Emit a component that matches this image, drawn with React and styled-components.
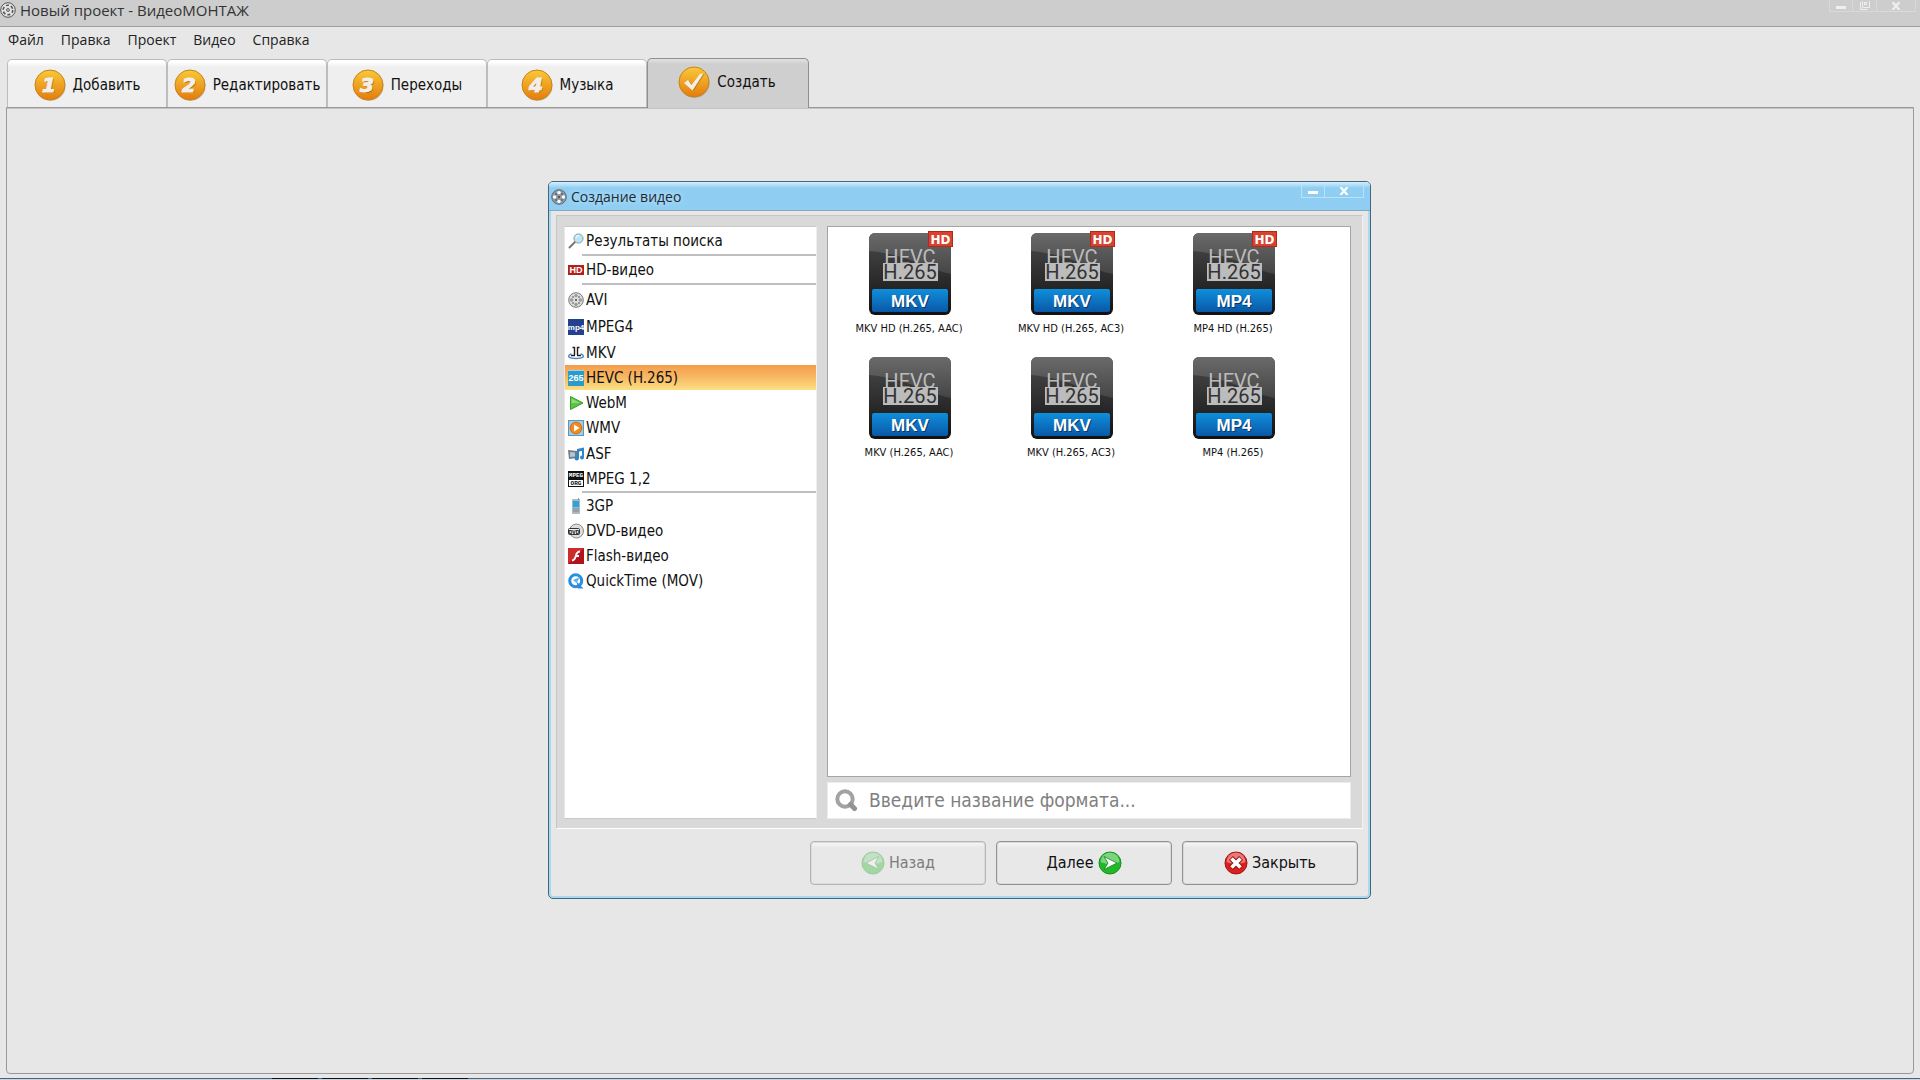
import { useState } from "react";
import styled, { createGlobalStyle } from "styled-components";

const GlobalStyle = createGlobalStyle`
  * { box-sizing: border-box; }
  body {
    margin: 0;
    background: #e7e7e7;
    color: #111;
    font-family: "DejaVu Sans Condensed", "Noto Sans", sans-serif;
  }
  button, input { font-family: inherit; color: inherit; }
`;

const Window = styled.div`
  display: flex;
  flex-direction: column;
  min-height: 100vh;
`;

const TitleBar = styled.header`
  display: flex;
  align-items: center;
  gap: 4px;
  height: 27px;
  padding-bottom: 6px;
  background: #cdcdcd;
  border-bottom: 1px solid #9f9f9f;
`;

const Title = styled.h1`
  flex: 1;
  margin: 0;
  font-family: "Open Sans", sans-serif;
  font-size: 15px;
  font-weight: 400;
  line-height: 20px;
  color: #333;
`;

const Controls = styled.div`
  display: flex;
  align-self: flex-start;
  margin-right: 4px;
`;

const Control = styled.button`
  display: flex;
  align-items: center;
  justify-content: center;
  width: ${({ $wide }) => ($wide ? "39px" : "24px")};
  height: ${({ $light }) => ($light ? "14px" : "12px")};
  padding: 0;
  background: transparent;
  border: 1px solid ${({ $light }) => ($light ? "#b9e2f8" : "#d9d9d9")};
  border-top: 0;
  & + & { border-left: 0; }
`;

const Menu = styled.nav`
  display: flex;
  gap: 17px;
  height: 31px;
  padding: 2px 8px;
`;

const MenuLink = styled.a`
  font-family: "Open Sans", sans-serif;
  font-size: 14px;
  line-height: 22px;
  color: #222;
  text-decoration: none;
`;

const Tabs = styled.div`
  display: flex;
  align-items: flex-end;
  height: 49px;
  padding-left: 7px;
`;

const Tab = styled.button`
  position: relative;
  display: flex;
  align-items: center;
  justify-content: center;
  gap: 7px;
  width: ${({ $active }) => ($active ? "162px" : "160px")};
  height: ${({ $active }) => ($active ? "50px" : "48px")};
  margin-bottom: ${({ $active }) => ($active ? "-1px" : "0")};
  padding: ${({ $active }) => ($active ? "0 2px 3px 0" : "2px 0 0")};
  white-space: nowrap;
  font-size: 15px;
  line-height: 22px;
  border: 1px solid ${({ $active }) => ($active ? "#8f8f8f" : "#bdbdbd")};
  border-bottom: 0;
  border-radius: 5px 5px 0 0;
  background: ${({ $active }) =>
    $active ? "linear-gradient(#e2e2e2, #cfcfcf 5px)" : "linear-gradient(#fff 2px, #efefef 7px)"};
`;

const Workspace = styled.main`
  flex: 1;
  display: flex;
  justify-content: center;
  align-items: flex-start;
  margin: 0 6px 4px;
  padding: 73px 17px 24px 16px;
  border: 1px solid #999;
  border-radius: 0 0 4px 4px;
  box-shadow: inset 0 1px 0 #c4c4c4;
`;

const Dialog = styled.section`
  width: 100%;
  max-width: 823px;
  border: 1px solid #46647c;
  border-radius: 5px;
  background: #e7e7e7;
  box-shadow: inset 0 0 0 2px #a9d9ee;
`;

const DialogTitleBar = styled.div`
  display: flex;
  align-items: center;
  gap: 4px;
  height: 29px;
  padding: 2px 2px 0;
  border-bottom: 1px solid #86a9bf;
  border-radius: 4px 4px 0 0;
  background: linear-gradient(#d4effc, #8fcef2 6px);
`;

const DialogTitle = styled.h2`
  flex: 1;
  margin: 0;
  font-family: "Open Sans", sans-serif;
  font-size: 14px;
  font-weight: 400;
  line-height: 22px;
  color: #1c2a36;
  text-shadow: 0 0 6px #d6eefb;
`;

const DialogBody = styled.div`
  display: flex;
  gap: 10px;
  margin: 4px 7px 0;
  padding: 10px 11px 9px 7px;
  background: #d9d9d9;
  border: 1px solid #c6c6c6;
  border-right-color: #f2f2f2;
  border-bottom-color: #fff;
`;

const FormatList = styled.ul`
  flex: 0 0 253px;
  min-height: 593px;
  margin: 0;
  padding: 0;
  list-style: none;
  background: #fff;
  border: 1px solid #c9c9c9;
  border-left-color: #e8e8e8;
  border-right-color: #efefef;
`;

const FormatItem = styled.li`
  height: ${({ $tall }) => $tall || 25}px;
  ${({ $line }) =>
    $line &&
    `background: linear-gradient(#bfbfbf, #bfbfbf) 17px 100% / 100% 2px no-repeat;
    padding-bottom: 2px;`}
`;

const FormatButton = styled.button`
  display: flex;
  align-items: center;
  gap: 2px;
  width: 100%;
  height: 100%;
  padding: 0 3px;
  border: 0;
  font-size: 15px;
  line-height: 22px;
  text-align: left;
  background: ${({ $active }) =>
    $active ? "linear-gradient(#f39d4c, #f8b964 50%, #fbe082)" : "transparent"};
`;

const Column = styled.div`
  flex: 1;
  display: flex;
  flex-direction: column;
  gap: 5px;
  min-width: 0;
`;

const Presets = styled.div`
  flex: 1;
  display: grid;
  grid-template-columns: repeat(auto-fill, 162px);
  grid-auto-rows: 124px;
  background: #fff;
  border: 1px solid #a5a5a5;
`;

const Preset = styled.button`
  display: flex;
  flex-direction: column;
  align-items: center;
  padding: 3px 0 0;
  border: 0;
  background: transparent;
  font-size: 11px;
  line-height: 26px;
  white-space: nowrap;
`;

const Search = styled.label`
  display: flex;
  align-items: center;
  gap: 11px;
  height: 37px;
  padding: 0 7px;
  background: #fff;
  border: 1px solid #ececec;
`;

const SearchInput = styled.input`
  flex: 1;
  min-width: 0;
  padding: 0 0 2px;
  border: 0;
  outline: 0;
  font-size: 19px;
  line-height: 28px;
  background: transparent;
  &::placeholder { color: #808080; opacity: 1; }
`;

const Footer = styled.footer`
  display: flex;
  justify-content: flex-end;
  gap: 10px;
  padding: 12px 12px 13px;
`;

const FooterButton = styled.button`
  display: flex;
  align-items: center;
  justify-content: center;
  gap: 4px;
  width: 176px;
  height: 44px;
  padding: 0;
  font-size: 16px;
  line-height: 22px;
  color: #111;
  border: 1px solid #919191;
  border-radius: 4px;
  background: linear-gradient(#f8f8f8, #e8e8e8 6px);
  box-shadow: inset 0 0 0 1px #dadada;
  &:disabled {
    color: #7c7c7c;
    border-color: #b5b5b5;
  }
`;

const Taskbar = styled.div`
  display: flex;
  gap: 4px;
  height: 2px;
  padding-left: 272px;
  background: #c5d5e2;
  border-top: 1px solid #4f6374;
`;

const TaskbarSlot = styled.span`
  width: 46px;
  height: 1px;
  margin-top: -1px;
  background: #111;
`;

const ReelIcon = ({ size = 16, dark }) => (
  <svg width={size} height={size} viewBox="0 0 16 16">
    <circle cx="8" cy="8" r="7.3" fill={dark ? "#8d98a5" : "#dedede"} stroke={dark ? "#5f6c78" : "#777"} strokeWidth="1" />
    <g fill={dark ? "#fff" : "#9a9a9a"}>
      <circle cx="8" cy="3.6" r="1.7" />
      <circle cx="8" cy="12.4" r="1.7" />
      <circle cx="3.6" cy="8" r="1.7" />
      <circle cx="12.4" cy="8" r="1.7" />
    </g>
    <g fill="#444">
      <circle cx="5" cy="5" r="0.8" />
      <circle cx="11" cy="5" r="0.8" />
      <circle cx="5" cy="11" r="0.8" />
      <circle cx="11" cy="11" r="0.8" />
      <circle cx="8" cy="8" r="1" />
    </g>
  </svg>
);

const AppIcon = () => (
  <svg width="16" height="16" viewBox="0 0 16 16" fill="none" stroke="#555">
    <circle cx="8" cy="8" r="7.3" fill="#e3e3e3" />
    <circle cx="8" cy="8" r="4.8" strokeWidth="1.6" strokeDasharray="3 2" />
    <circle cx="8" cy="8" r="1.4" />
  </svg>
);

const StepIcon = ({ step }) => (
  <svg width="32" height="32" viewBox="0 0 32 32">
    <defs>
      <linearGradient id="gold" x1="0" y1="0" x2="0" y2="1">
        <stop offset="0" stopColor="#f9c938" />
        <stop offset="1" stopColor="#e47c0c" />
      </linearGradient>
    </defs>
    <circle cx="16.5" cy="17" r="15" fill="#9a8a78" opacity="0.5" />
    <circle cx="16" cy="16" r="15" fill="url(#gold)" stroke="#c98218" strokeWidth="1" />
    {step ? (
      <g fontFamily="DejaVu Sans" fontWeight="700" fontStyle="italic" fontSize="20" textAnchor="middle" strokeWidth="1">
        <text x="16" y="24" fill="#a8661a">{step}</text>
        <text x="15" y="23" fill="#f3efe8" stroke="#f3efe8">{step}</text>
      </g>
    ) : (
      <>
        <path d="M7 17.500l4-3 3.500 5 8.500-11 3.500-.5-11 17z" fill="#a8661a" opacity="0.6" />
        <path d="M6 17l4-3 3.500 5 8.500-11 3.500-.5-11 17z" fill="#f3efe8" />
      </>
    )}
  </svg>
);

const BadgeIcon = ({ text, bg, size = 7, border }) => (
  <svg width="16" height="16" viewBox="0 0 16 16">
    <rect width="16" height="16" fill={bg} />
    {border && <path d="M0 .5h16" stroke={border} />}
    <text x="8" y="11" fill="#fff" fontFamily="Liberation Sans" fontWeight="700" fontSize={size} textAnchor="middle">{text}</text>
  </svg>
);

const icons = {
  find: (
    <svg width="16" height="16" viewBox="0 0 16 16">
      <path d="M1.500 14.500L7 9" stroke="#777" strokeWidth="2" strokeLinecap="round" />
      <circle cx="10.500" cy="5.500" r="4.600" fill="#b9e6f3" stroke="#8d9ba3" />
      <path d="M8 5a3 3 0 0 1 3-2.500" stroke="#fff" fill="none" />
    </svg>
  ),
  hd: (
    <svg width="16" height="16" viewBox="0 0 16 16">
      <rect y="3" width="16" height="10" fill="#b3201b" />
      <text x="8" y="11" fill="#fff" fontFamily="Liberation Sans" fontWeight="700" fontSize="9" textAnchor="middle">HD</text>
    </svg>
  ),
  avi: <ReelIcon />,
  mp4: <BadgeIcon text="mp4" bg="#24408e" size={8} />,
  mkv: (
    <svg width="16" height="16" viewBox="0 0 16 16" fill="none">
      <path d="M3.500 9C1 9.500 0 11 1 12c2 2 12 2 14 0 1-1 0-2.500-2.500-3" stroke="#4d86c2" strokeWidth="1.300" />
      <path d="M4.500 2.500H6.500V10M3 10.500h4M11.500 2.500H9.500V10M9 10.500h4" stroke="#222" strokeWidth="1.400" />
    </svg>
  ),
  hevc: <BadgeIcon text="265" bg="#2b9bc9" size={9} border="#9bd5ea" />,
  webm: (
    <svg width="16" height="16" viewBox="0 0 16 16">
      <path d="M2.500 1.500L15 8 2.500 14.500z" fill="#5cc343" stroke="#3b9a2c" />
      <path d="M3.500 3.500L12 8l-8.500 0z" fill="#8ddb76" />
    </svg>
  ),
  wmv: (
    <svg width="16" height="16" viewBox="0 0 16 16">
      <rect x=".5" y=".5" width="15" height="15" fill="#9ccbe6" stroke="#5f95b8" />
      <circle cx="8" cy="8" r="5.800" fill="#f08a1c" stroke="#d86f0c" />
      <path d="M6 4.500L11.500 8 6 11.500z" fill="#fff" />
    </svg>
  ),
  asf: (
    <svg width="16" height="16" viewBox="0 0 16 16">
      <path d="M0 4l9 1v7l-8 1z" fill="#6c7c88" />
      <path d="M2 6l5 .5v4L2 11z" fill="#b3c6d2" />
      <path d="M9 3l7-1.500v10a2 2 0 1 1-2-2V5l-3 .5V12a2.200 2.200 0 1 1-2-2z" fill="#2f86c5" />
    </svg>
  ),
  mpeg: (
    <svg width="16" height="16" viewBox="0 0 16 16">
      <rect width="16" height="16" fill="#111" />
      <rect x="1" y="9" width="14" height="6" fill="#fff" />
      <g fontFamily="Liberation Mono" fontWeight="700" fontSize="6" textAnchor="middle">
        <text x="8" y="6" fill="#fff">MPEG</text>
        <text x="8" y="14" fill="#111">ORG</text>
      </g>
    </svg>
  ),
  phone: (
    <svg width="16" height="16" viewBox="0 0 16 16">
      <rect x="4" y="1" width="8" height="15" rx="1" fill="#a9b8c2" />
      <rect x="5" y="3" width="6" height="6" fill="#2aa5d8" />
      <path d="M5 11h6M5 13h6" stroke="#7d8c96" />
      <path d="M10.500 0v2" stroke="#8a9aa5" />
    </svg>
  ),
  dvd: (
    <svg width="16" height="16" viewBox="0 0 16 16">
      <circle cx="8.500" cy="8" r="7" fill="#dcdcdc" stroke="#8b8b8b" />
      <rect x=".5" y="5.500" width="11" height="6" rx="1" fill="#eee" stroke="#333" />
      <text x="6" y="10.500" fontFamily="Liberation Sans" fontWeight="700" fontSize="5" textAnchor="middle">DVD</text>
    </svg>
  ),
  flash: (
    <svg width="16" height="16" viewBox="0 0 16 16">
      <rect width="16" height="16" fill="#b0141a" />
      <path d="M0 0h16L0 16z" fill="#cf2a2c" />
      <path d="M12 3.500C8.500 3.500 8.500 6 7.700 8.500S6 12.500 4 12.500M7.500 8H11" stroke="#fff" strokeWidth="1.900" fill="none" />
    </svg>
  ),
  quicktime: (
    <svg width="16" height="16" viewBox="0 0 16 16">
      <circle cx="7.700" cy="7.700" r="6" fill="#fff" stroke="#2b8de0" strokeWidth="3" />
      <path d="M8.500 8.500l7 7H10z" fill="#2b8de0" />
      <path d="M5 7l7-3-3.500 6z" fill="#58b4f2" />
    </svg>
  ),
};

const HevcIcon = ({ type, hd }) => (
  <svg width="88" height="86" viewBox="-4 -3 88 86">
    <defs>
      <linearGradient id="tile" x1="0" y1="0" x2="0" y2="1">
        <stop offset="0" stopColor="#4c4c4c" />
        <stop offset="1" stopColor="#121212" />
      </linearGradient>
      <linearGradient id="gloss" x1="0" y1="0" x2="0" y2="1">
        <stop offset="0" stopColor="#6a6a6a" />
        <stop offset="1" stopColor="#454545" />
      </linearGradient>
      <linearGradient id="strip" x1="0" y1="0" x2="0" y2="1">
        <stop offset="0" stopColor="#0f8fdc" />
        <stop offset="1" stopColor="#0a58a6" />
      </linearGradient>
    </defs>
    <rect width="82" height="82" rx="6" fill="url(#tile)" />
    <path d="M0 18V6a6 6 0 0 1 6-6h70a6 6 0 0 1 6 6v35C60 37 38 21 0 18z" fill="url(#gloss)" />
    <text x="41" y="31" fontFamily="Roboto" fontSize="20" fill="#bcbcbc" textAnchor="middle">HEVC</text>
    <rect x="14" y="30" width="55" height="18" fill="#bcbcbc" />
    <text x="41" y="46" fontFamily="Roboto" fontSize="20" fill="#333" textAnchor="middle">H.265</text>
    <rect x="3" y="56" width="76" height="23" rx="2" fill="url(#strip)" />
    <g fontFamily="Liberation Sans" fontWeight="700" fontSize="17" textAnchor="middle">
      <text x="42" y="75" fill="#063a70">{type}</text>
      <text x="41" y="74" fill="#fff">{type}</text>
    </g>
    {hd && (
      <>
        <rect x="59.500" y="-1.500" width="24" height="15" fill="#d8432e" stroke="#b02a1a" />
        <text x="71.500" y="11" fontFamily="DejaVu Sans" fontWeight="700" fontSize="12" fill="#fff" textAnchor="middle">HD</text>
      </>
    )}
  </svg>
);

const MinimizeIcon = ({ color }) => (
  <svg width="10" height="8" viewBox="0 0 10 8">
    <rect y="4" width="10" height="3" fill={color} />
  </svg>
);

const RestoreIcon = () => (
  <svg width="10" height="9" viewBox="0 0 10 9" fill="none" stroke="#efefef">
    <path d="M2.500 0v6.500h7V0" />
    <path d="M.5 1v7.500h7" />
    <rect x="4.500" y="1.500" width="2" height="2" />
  </svg>
);

const CrossIcon = ({ color }) => (
  <svg width="10" height="8" viewBox="0 0 10 8">
    <path d="M1.500 0l7 8M8.500 0l-7 8" stroke={color} strokeWidth="2.200" />
  </svg>
);

const SearchIcon = () => (
  <svg width="23" height="23" viewBox="0 0 23 23" fill="none" stroke="#a2a2a2">
    <circle cx="10" cy="10" r="7.700" strokeWidth="4" />
    <path d="M15.500 15.500l4 4" stroke="#939393" strokeWidth="5" strokeLinecap="round" />
  </svg>
);

const RoundIcon = ({ kind }) => {
  const red = kind === "close";
  return (
    <svg width="24" height="24" viewBox="0 0 24 24" opacity={kind === "back" ? 0.35 : 1}>
      <circle cx="12" cy="12" r="11" fill={red ? "#df1f1f" : "#22b929"} stroke={red ? "#9d1414" : "#168d1d"} />
      <path d="M2.500 11a9.500 9.500 0 0 1 19 0c-6 2.500-13 2.500-19 0z" fill="#fff" opacity="0.4" />
      {kind === "close" && (
        <path d="M7 7l10 10M17 7L7 17" stroke="#8e1010" strokeWidth="5.500" />
      )}
      {kind === "close" && <path d="M7.500 7.500l9 9M16.500 7.500l-9 9" stroke="#fff" strokeWidth="3.600" />}
      {kind === "next" && <path d="M6 5.500l13 6.500-13 6.500L10 12z" fill="#fff" stroke="#128318" strokeWidth="0.800" />}
      {kind === "back" && <path d="M18 5.500L5 12l13 6.500L14 12z" fill="#fff" stroke="#128318" strokeWidth="0.800" />}
    </svg>
  );
};

const menu = ["Файл", "Правка", "Проект", "Видео", "Справка"];

const tabs = [
  { label: "Добавить", step: "1" },
  { label: "Редактировать", step: "2" },
  { label: "Переходы", step: "3" },
  { label: "Музыка", step: "4" },
  { label: "Создать" },
];

const formats = [
  { label: "Результаты поиска", icon: "find", tall: 29, line: true },
  { label: "HD-видео", icon: "hd", tall: 29, line: true },
  { label: "AVI", icon: "avi", tall: 29 },
  { label: "MPEG4", icon: "mp4", tall: 26 },
  { label: "MKV", icon: "mkv" },
  { label: "HEVC (H.265)", icon: "hevc" },
  { label: "WebM", icon: "webm" },
  { label: "WMV", icon: "wmv" },
  { label: "ASF", icon: "asf", tall: 27 },
  { label: "MPEG 1,2", icon: "mpeg", tall: 26, line: true },
  { label: "3GP", icon: "phone" },
  { label: "DVD-видео", icon: "dvd" },
  { label: "Flash-видео", icon: "flash" },
  { label: "QuickTime (MOV)", icon: "quicktime" },
];

const presets = [
  { label: "MKV HD (H.265, AAC)", type: "MKV", hd: true },
  { label: "MKV HD (H.265, AC3)", type: "MKV", hd: true },
  { label: "MP4 HD (H.265)", type: "MP4", hd: true },
  { label: "MKV (H.265, AAC)", type: "MKV" },
  { label: "MKV (H.265, AC3)", type: "MKV" },
  { label: "MP4 (H.265)", type: "MP4" },
];

const App = () => {
  const [format, setFormat] = useState("HEVC (H.265)");
  const [tab, setTab] = useState("Создать");

  return (
    <Window>
      <GlobalStyle />
      <TitleBar>
        <AppIcon />
        <Title>Новый проект - ВидеоМОНТАЖ</Title>
        <Controls>
          <Control aria-label="Свернуть"><MinimizeIcon color="#efefef" /></Control>
          <Control aria-label="Развернуть"><RestoreIcon /></Control>
          <Control aria-label="Закрыть" $wide><CrossIcon color="#efefef" /></Control>
        </Controls>
      </TitleBar>

      <Menu>
        {menu.map((m) => (
          <MenuLink href="#" key={m}>{m}</MenuLink>
        ))}
      </Menu>

      <Tabs>
        {tabs.map((t) => (
          <Tab key={t.label} $active={tab === t.label} onClick={() => setTab(t.label)}>
            <StepIcon step={t.step} />
            {t.label}
          </Tab>
        ))}
      </Tabs>

      <Workspace>
        <Dialog>
          <DialogTitleBar>
            <ReelIcon dark />
            <DialogTitle>Создание видео</DialogTitle>
            <Controls>
              <Control aria-label="Свернуть" $light><MinimizeIcon color="#fff" /></Control>
              <Control aria-label="Закрыть" $light $wide><CrossIcon color="#fff" /></Control>
            </Controls>
          </DialogTitleBar>

          <DialogBody>
            <FormatList>
              {formats.map((f) => (
                <FormatItem key={f.label} $tall={f.tall} $line={f.line}>
                  <FormatButton $active={format === f.label} onClick={() => setFormat(f.label)}>
                    {icons[f.icon]}
                    {f.label}
                  </FormatButton>
                </FormatItem>
              ))}
            </FormatList>
            <Column>
              <Presets>
                {presets.map((p) => (
                  <Preset key={p.label}>
                    <HevcIcon type={p.type} hd={p.hd} />
                    {p.label}
                  </Preset>
                ))}
              </Presets>
              <Search>
                <SearchIcon />
                <SearchInput type="text" placeholder="Введите название формата..." />
              </Search>
            </Column>
          </DialogBody>

          <Footer>
            <FooterButton disabled><RoundIcon kind="back" />Назад</FooterButton>
            <FooterButton>Далее<RoundIcon kind="next" /></FooterButton>
            <FooterButton><RoundIcon kind="close" />Закрыть</FooterButton>
          </Footer>
        </Dialog>
      </Workspace>

      <Taskbar>
        <TaskbarSlot />
        <TaskbarSlot />
        <TaskbarSlot />
        <TaskbarSlot />
      </Taskbar>
    </Window>
  );
};

export default App;
